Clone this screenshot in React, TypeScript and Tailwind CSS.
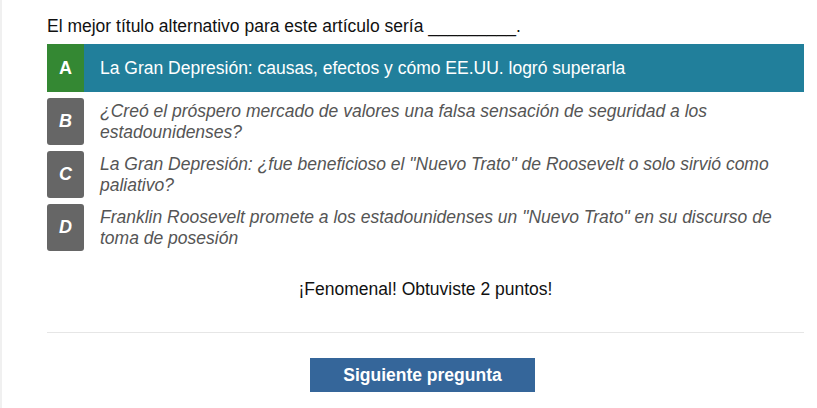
import React from "react"

type Option = {
    letter: string
    text: string
    selected?: boolean
}

const options: Option[] = [
    { letter: "A", text: "La Gran Depresión: causas, efectos y cómo EE.UU. logró superarla", selected: true },
    { letter: "B", text: "¿Creó el próspero mercado de valores una falsa sensación de seguridad a los estadounidenses?" },
    { letter: "C", text: "La Gran Depresión: ¿fue beneficioso el \"Nuevo Trato\" de Roosevelt o solo sirvió como paliativo?" },
    { letter: "D", text: "Franklin Roosevelt promete a los estadounidenses un \"Nuevo Trato\" en su discurso de toma de posesión" },
]

const OptionRow = ({ option }: { option: Option }) => {
    if (option.selected) {
        return (
            <div className="flex h-[48px] items-stretch bg-[#217f9b]">
                <div className="flex w-[37px] items-center justify-center bg-[#348833] text-[18px] font-bold text-white">
                    {option.letter}
                </div>
                <div className="flex items-center pl-[16px] text-[17.5px] text-white">{option.text}</div>
            </div>
        )
    }
    return (
        <div className="flex items-stretch">
            <div className="flex h-[47px] w-[37px] shrink-0 items-center justify-center rounded-[3px] bg-[#666666] text-[18px] font-bold italic text-white">
                {option.letter}
            </div>
            <div className="flex items-center pl-[16px] pr-[20px] text-[17.5px] italic leading-[21px] text-[#555555]">
                {option.text}
            </div>
        </div>
    )
}

export default function App() {
    return (
        <div className="h-[408px] w-[817px] border-l-2 border-[#f0f0f0] bg-white font-['Liberation_Sans',Arial,sans-serif]">
            <div className="ml-[45px] w-[757px] pt-[16px]">
                <p className="text-[17.5px] leading-[20px] text-[#111111]">
                    El mejor título alternativo para este artículo sería _________.
                </p>
                <div className="mt-[8px] flex flex-col gap-[6px]">
                    {options.map((o) => (
                        <OptionRow key={o.letter} option={o} />
                    ))}
                </div>
                <p className="mt-[28px] text-center text-[17.5px] leading-[20px] text-[#111111]">
                    ¡Fenomenal! Obtuviste 2 puntos!
                </p>
                <div className="mt-[33px] h-px bg-[#e6e6e6]" />
                <div className="mt-[25px] flex justify-center pr-[6px]">
                    <button className="h-[34px] w-[225px] bg-[#35669a] text-[17.5px] font-bold text-white">
                        Siguiente pregunta
                    </button>
                </div>
            </div>
        </div>
    )
}
